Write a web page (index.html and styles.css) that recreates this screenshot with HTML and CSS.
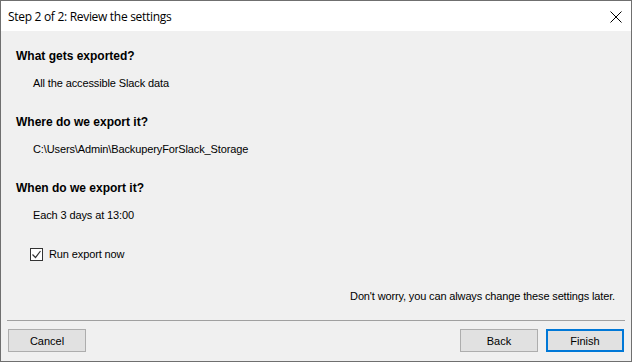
FILE: index.html
```html
<!DOCTYPE html>
<html lang="en">
<head>
  <meta charset="UTF-8">
  <title>Step 2 of 2: Review the settings</title>
  <link rel="stylesheet" href="styles.css">
</head>
<body>

  <div class="window">
    <!-- Title bar -->
    <div class="titlebar">
      <span class="title">Step 2 of 2: Review the settings</span>
      <span class="close">
        <svg width="12" height="12" viewBox="0 0 12 12">
          <path d="M0.5 0.5 L11.5 11.5 M11.5 0.5 L0.5 11.5" stroke="#000" stroke-width="1" fill="none"/>
        </svg>
      </span>
    </div>

    <!-- Summary -->
    <div class="content">
      <h2 class="heading">What gets exported?</h2>
      <p class="value">All the accessible Slack data</p>

      <h2 class="heading">Where do we export it?</h2>
      <p class="value">C:\Users\Admin\BackuperyForSlack_Storage</p>

      <h2 class="heading">When do we export it?</h2>
      <p class="value">Each 3 days at 13:00</p>

      <label class="check">
        <span class="box">
          <svg width="11" height="11" viewBox="0 0 11 11">
            <path d="M1.5 5.5 L4.5 8.5 L9.5 2" stroke="#333" stroke-width="1.2" fill="none"/>
          </svg>
        </span>
        Run export now
      </label>

      <p class="note">Don't worry, you can always change these settings later.</p>
    </div>

    <!-- Buttons -->
    <div class="footer">
      <div class="buttons">
        <button class="btn">Cancel</button>
        <div class="right">
          <button class="btn">Back</button>
          <button class="btn primary">Finish</button>
        </div>
      </div>
    </div>
  </div>

</body>
</html>
```

FILE: styles.css
```css
body {
  margin: 0;
  font-family: "Liberation Sans", Arial, sans-serif;
  font-size: 11px;
  color: #000;
  background: #f0f0f0;
}

.window {
  width: 632px;
  height: 362px;
  box-sizing: border-box;
  border: 1px solid #6f6f6f;
  background: #f0f0f0;
  display: flex;
  flex-direction: column;
}

.titlebar {
  height: 30px;
  background: #fff;
  display: flex;
  align-items: center;
  justify-content: space-between;
  padding: 0 9px 0 7px;
}

.title {
  font-family: "Open Sans", "Noto Sans", sans-serif;
  font-size: 12px;
  letter-spacing: -0.3px;
}

.close {
  display: flex;
  margin-top: 1px;
}

.content {
  flex: 1;
  padding: 17px 15px 0 15px;
}

.heading {
  margin: 0;
  font-size: 12px;
  line-height: 16px;
  font-weight: bold;
}

.value {
  margin: 11px 0 23px 17px;
  line-height: 16px;
  letter-spacing: -0.12px;
}

.check {
  display: flex;
  align-items: center;
  gap: 6px;
  margin-left: 14px;
  line-height: 16px;
  letter-spacing: -0.12px;
}

.box {
  width: 11px;
  height: 11px;
  border: 1px solid #333;
  background: #fff;
  display: flex;
}

.note {
  margin: 26px 0 0 0;
  text-align: right;
  padding-right: 1px;
  line-height: 16px;
  letter-spacing: -0.14px;
}

.footer {
  margin: 0 6px;
  border-top: 1px solid #a0a0a0;
  padding: 8px 1px 9px 1px;
}

.buttons {
  display: flex;
  justify-content: space-between;
}

.right {
  display: flex;
  gap: 8px;
}

.btn {
  width: 78px;
  height: 23px;
  font-family: "Liberation Sans", Arial, sans-serif;
  font-size: 11px;
  color: #000;
  background: #e1e1e1;
  border: 1px solid #adadad;
  padding: 0;
}

.primary {
  border: 2px solid #0078d7;
}
```
